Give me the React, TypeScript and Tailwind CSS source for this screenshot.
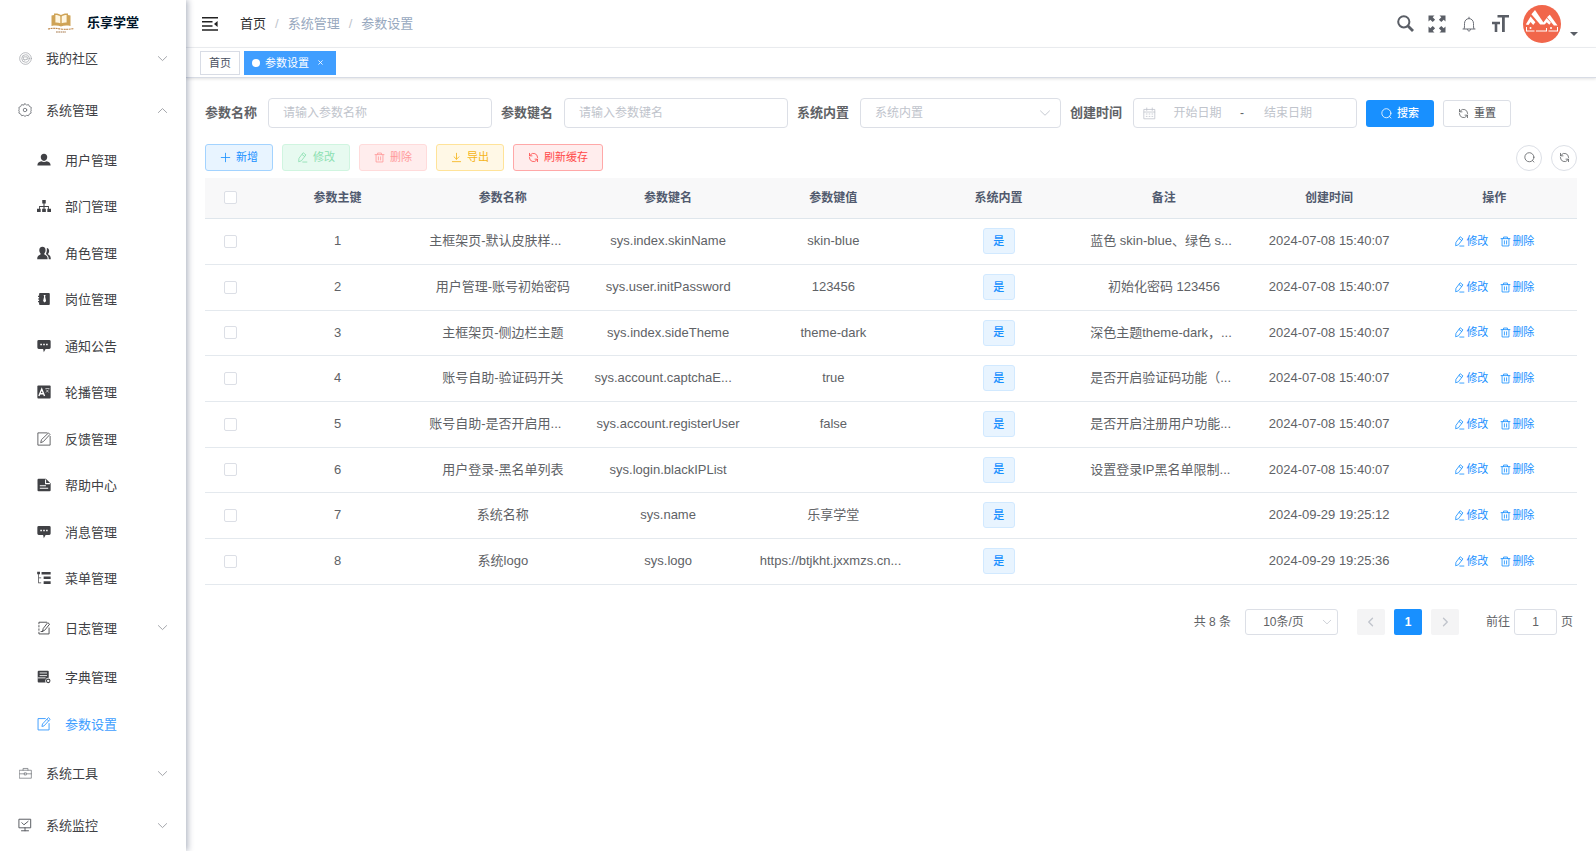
import type { ReactNode } from "react";

type IconProps = { className?: string };

function Line({ className = "size-3", width = 1.2, children }: IconProps & { width?: number; children: ReactNode }) {
  return (
    <svg viewBox="0 0 16 16" className={`${className} shrink-0`} fill="none" stroke="currentColor" strokeWidth={width} strokeLinecap="round" strokeLinejoin="round" aria-hidden="true">
      {children}
    </svg>
  );
}

function Solid({ className = "size-[14px]", children }: IconProps & { children: ReactNode }) {
  return (
    <svg viewBox="0 0 16 16" className={`${className} shrink-0`} fill="currentColor" aria-hidden="true">
      {children}
    </svg>
  );
}

const SearchIcon = ({ className }: IconProps) => (
  <Line className={className}>
    <circle cx="7.8" cy="7.6" r="6.6" />
    <path d="M12.4 12.4 14.4 14.6" />
  </Line>
);

const RefreshIcon = ({ className }: IconProps) => (
  <Line className={className}>
    <path d="M14 8a6 6 0 0 0-10.6-3.8L2.2 5.6M2.2 2v3.6h3.6" />
    <path d="M2 8a6 6 0 0 0 10.6 3.8l1.2-1.4M13.8 14v-3.6h-3.6" />
  </Line>
);

const EditIcon = ({ className }: IconProps) => (
  <Line className={className}>
    <path d="M9.4 1.4 13 4.2 6.4 12.8 2.4 14.2l.4-4.4z" />
    <path d="M7.6 3.8l3.6 2.8M8.4 14.6h6" />
  </Line>
);

const TrashIcon = ({ className }: IconProps) => (
  <Line className={className}>
    <path d="M1.5 3.8h13M5.2 3.6V1.5h5.6v2.1M3 4v10.5h10V4M6.4 7v4.6M9.6 7v4.6" />
  </Line>
);

const PlusIcon = ({ className }: IconProps) => (
  <Line className={className}>
    <path d="M8 1.8v12.4M1.8 8h12.4" />
  </Line>
);

const DownloadIcon = ({ className }: IconProps) => (
  <Line className={className}>
    <path d="M8 1.8v8.6M4.4 7 8 10.6 11.6 7M2 14h12" />
  </Line>
);

const Chevron = ({ className = "size-3", d = "M2 5.2 8 11l6-5.8" }: IconProps & { d?: string }) => (
  <Line className={className}>
    <path d={d} />
  </Line>
);

const CalendarIcon = ({ className }: IconProps) => (
  <Line className={className} width={1}>
    <path d="M1.5 3h13v11.5h-13zM1.5 6.2h13M4.6 1.2v3M11.4 1.2v3" />
    <path d="M4 8.6h1M7.5 8.6h1M11 8.6h1M4 11.6h1M7.5 11.6h1M11 11.6h1" />
  </Line>
);

/* sidebar icons */
const CommunityIcon = () => (
  <Line className="size-[13px] text-[#a0a3a9]" width={0.9}>
    <circle cx="8" cy="8" r="7.2" />
    <circle cx="8" cy="8" r="4.6" />
    <path d="M5.8 6h4.4v3.2H8.4L7 10.4V9.2H5.8z" />
  </Line>
);

const GearIcon = () => (
  <Line className="size-[14px] text-[#707379]" width={1}>
    <path d="M8 .8l1.8 1.5 2.3-.4 1 2.1 2.1 1-.4 2.2L15.3 8l-.7 1.5.4 2-2 1-1 2-2.2-.4L8 15.3l-1.8-1.2-2.2.4-1-2-2-1 .4-2L.7 8l.7-.8L1 5l2.1-1 1-2.1 2.3.4z" />
    <circle cx="8" cy="8" r="2" />
  </Line>
);

const UserIcon = () => (
  <Solid>
    <path d="M8 .8c2.3 0 3.7 1.5 3.7 3.7S10.2 9 8 9 4.3 6.7 4.3 4.500 5.700.8 8 .8zM.4 14.400c0-3.300 2-4.200 4.600-5 1.800 1.100 4.200 1.100 6 0 2.600.8 4.600 1.700 4.600 5z" />
  </Solid>
);

const TreeIcon = () => (
  <Solid>
    <path d="M6 1h4v4H8.600v3h5V11H16v3.800h-4.200V11h.8V9H8.600v2h1.500v3.800H5.900V11h1.500V9h-4v2h.8v3.800H0V11h2.400V8h5V5H6z" />
  </Solid>
);

const PeoplesIcon = () => (
  <Solid>
    <path d="M6.2.8c2.400 0 3.600 1.700 3.600 4 0 1.600-.6 2.800-1.400 3.500v1.300c2.400.9 3.800 1.800 3.800 5.400H.2c0-3.600 1.400-4.500 3.800-5.400V8.300C3.200 7.600 2.600 6.400 2.600 4.800c0-2.300 1.200-4 3.600-4z" />
    <path d="M11.200 2.200c1.800.2 2.700 1.700 2.700 3.500 0 1.300-.4 2.300-1.100 2.900v1c2 .9 3 2.200 3 5.400h-2.400c0-2.800-.8-4.400-3-5.700V8.200c.8-1 1-3.800.8-6z" />
  </Solid>
);

const PostIcon = () => (
  <Solid>
    <path d="M3.400 1.200h10.200a1 1 0 0 1 1 1v11.600a1 1 0 0 1-1 1H3.400a1 1 0 0 1-1-1v-2H1.200v-1.400h1.200V8.700H1.200V7.300h1.200V5.600H1.200V4.200h1.200v-2a1 1 0 0 1 1-1z" />
    <path fill="#fff" d="M7.600 3.400h2.200l-.5 2 1.100 5L8.700 12 7 10.400l1.100-5z" />
  </Solid>
);

const MessageIcon = () => (
  <Solid>
    <path d="M2 1h12a1.600 1.600 0 0 1 1.600 1.600v7.200a1.600 1.600 0 0 1-1.600 1.600H9.800L7.800 15l-.8-3.600H2A1.600 1.600 0 0 1 .4 9.800V2.600A1.600 1.600 0 0 1 2 1z" />
    <path fill="#fff" d="M3.800 5.400h1.800v1.800H3.800zM7.100 5.400h1.800v1.800H7.100zM10.400 5.400h1.800v1.800h-1.800z" />
  </Solid>
);

const LanguageIcon = () => (
  <Solid>
    <rect x=".4" y=".6" width="15.2" height="14.8" rx="1" />
    <path fill="none" stroke="#fff" strokeWidth="1.6" d="M2.200 12.600 5.400 4.600l3.200 8M3.400 10h4" />
    <path fill="none" stroke="#fff" strokeWidth=".7" d="M9.600 4h4.600M10.400 5.200l3 3.400M13.400 5.200l-3.200 3.400" />
  </Solid>
);

const NoteIcon = () => (
  <Line className="size-[14px]" width={0.9}>
    <path d="M15 5v10H1V1h10.500" />
    <path d="M13.400 1.400l1.400 1.400-7.600 8.200-3 1.200.8-3z" />
  </Line>
);

const FormIcon = () => (
  <Line className="size-[14px]" width={1.1}>
    <path d="M9.500 1.800H1.200v13h12.600V7.500" />
    <path d="M13.400 1l1.600 1.600-7 7.600-2.400.6.600-2.400zM11.600 2.800l1.600 1.600" />
  </Line>
);

const DocumentIcon = () => (
  <Solid>
    <path d="M1.800.8h8.400l5.400 5.400V14a1.200 1.200 0 0 1-1.200 1.200H1.800A1.200 1.200 0 0 1 .6 14V2A1.200 1.200 0 0 1 1.800.8z" />
    <path fill="none" stroke="#fff" strokeWidth="1.2" d="M9.800 1.600v4.800h5M3.200 8.800h7M3.200 11.800h9.600" />
  </Solid>
);

const MenuTreeIcon = () => (
  <Solid>
    <path d="M.2.8h3.200v3H2.200v3.600h2.600v.8H2.200v5h2.600v.8H1.400V3.800H.2z" />
    <path d="M5.200 1h10.400v3H5.200zM7.600 6.200h8v3h-8zM7.600 11.600h8v3.200h-8z" />
  </Solid>
);

const LogIcon = () => (
  <Line className="size-[14px]" width={1}>
    <path d="M11 1.400H2.200v1.800M2.200 5.200v1.600M2.200 9v1.600M2.200 12.800v2h11.600V8" />
    <path d="M12.600 2.200l1.800 1.400-5.600 7-2.400 1 .6-2.600zM4.600 12h2" />
  </Line>
);

const DictIcon = () => (
  <Solid>
    <path d="M2 .8h10.400a1 1 0 0 1 1 1V9a3.600 3.600 0 0 0-3.600 5.200H1.800a1 1 0 0 1-1-1V2A1.200 1.200 0 0 1 2 .8z" />
    <path fill="none" stroke="#fff" strokeWidth="1" d="M3 3.400h8.400M3 6.400h8.400M.8 9h9" />
    <circle cx="12.8" cy="12.4" r="2" fill="none" stroke="currentColor" strokeWidth="1.2" />
  </Solid>
);

const ToolIcon = () => (
  <Line className="size-[13px] text-[#707379]" width={0.9}>
    <path d="M.8 4h14.400v9.800H.8zM5 4V1.800h6V4M.8 8.400h5.800M9.400 8.400h5.800M7 7.200h2v2.600H7z" />
  </Line>
);

const MonitorIcon = () => (
  <Line className="size-[14px] text-[#55585e]" width={1.1}>
    <path d="M1.500 1.400h13v9.800h-13zM8 11.200v3.400M4 14.600h8M4.400 5.400l2.400 2.400 4.800-4" />
  </Line>
);

type Item = { label: string; icon: ReactNode; active?: boolean; group?: boolean };

const menuItems: Item[] = [
  { label: "用户管理", icon: <UserIcon /> },
  { label: "部门管理", icon: <TreeIcon /> },
  { label: "角色管理", icon: <PeoplesIcon /> },
  { label: "岗位管理", icon: <PostIcon /> },
  { label: "通知公告", icon: <MessageIcon /> },
  { label: "轮播管理", icon: <LanguageIcon /> },
  { label: "反馈管理", icon: <NoteIcon /> },
  { label: "帮助中心", icon: <DocumentIcon /> },
  { label: "消息管理", icon: <MessageIcon /> },
  { label: "菜单管理", icon: <MenuTreeIcon /> },
  { label: "日志管理", icon: <LogIcon />, group: true },
  { label: "字典管理", icon: <DictIcon /> },
  { label: "参数设置", icon: <FormIcon />, active: true },
];

const rows = [
  ["主框架页-默认皮肤样...", "sys.index.skinName", "skin-blue", "蓝色 skin-blue、绿色 s...", "2024-07-08 15:40:07"],
  ["用户管理-账号初始密码", "sys.user.initPassword", "123456", "初始化密码 123456", "2024-07-08 15:40:07"],
  ["主框架页-侧边栏主题", "sys.index.sideTheme", "theme-dark", "深色主题theme-dark，...", "2024-07-08 15:40:07"],
  ["账号自助-验证码开关", "sys.account.captchaE...", "true", "是否开启验证码功能（...", "2024-07-08 15:40:07"],
  ["账号自助-是否开启用...", "sys.account.registerUser", "false", "是否开启注册用户功能...", "2024-07-08 15:40:07"],
  ["用户登录-黑名单列表", "sys.login.blackIPList", "", "设置登录IP黑名单限制...", "2024-07-08 15:40:07"],
  ["系统名称", "sys.name", "乐享学堂", "", "2024-09-29 19:25:12"],
  ["系统logo", "sys.logo", "https://btjkht.jxxmzs.cn...", "", "2024-09-29 19:25:36"],
];

const columns = ["参数主键", "参数名称", "参数键名", "参数键值", "系统内置", "备注", "创建时间", "操作"];

function Group({ label, icon, open }: { label: string; icon: ReactNode; open?: boolean }) {
  return (
    <button className="flex h-[52px] w-full items-center px-[18px]">
      <span className="flex w-[14px] justify-center">{icon}</span>
      <span className="ml-[14px] pt-0.5">{label}</span>
      <Chevron className="ml-auto size-[11px] text-[#909399]" d={open ? "M2 11l6-5.8L14 11" : undefined} />
    </button>
  );
}

function Sidebar() {
  return (
    <aside className="z-10 flex w-[186px] shrink-0 flex-col overflow-hidden bg-white text-[13px] text-[#404145] shadow-[2px_0_6px_rgba(0,21,60,0.3)]">
      <a href="#" className="flex h-[45px] shrink-0 items-center justify-center gap-3">
        <svg viewBox="0 0 28 22" className="h-[22px] w-7" aria-hidden="true">
          <path fill="#cfa356" d="M4.500 3.500 7 3V1.500c3-.3 5.300.2 7 1.500 1.700-1.300 4-1.800 7-1.500V3l2.500.5V14c-4-.8-7-.6-9.500.6-2.500-1.200-5.500-1.400-9.500-.6z" />
          <path fill="#fff6e0" d="M8.400 3c2.200 0 3.800.5 4.900 1.500v6.800c-1.300-.8-3-1-4.900-.9zM19.600 3c-2.200 0-3.800.5-4.900 1.500v6.800c1.300-.8 3-1 4.900-.9z" />
          <path fill="none" stroke="#c08a4e" strokeWidth="1.1" strokeDasharray="2 .6" d="M1 17c4-1 8-.8 13 0s9 0 13-.4" />
          <path fill="none" stroke="#a87a4c" strokeWidth="1.2" strokeDasharray="1.8 .5" d="M9 20h10" />
        </svg>
        <span className="text-[13px] font-bold text-[#001529]">乐享学堂</span>
      </a>
      <nav className="min-h-0 flex-1 overflow-hidden">
        <div className="-mt-[13px]">
          <Group label="我的社区" icon={<CommunityIcon />} />
          <Group label="系统管理" icon={<GearIcon />} open />
          <ul>
            {menuItems.map((item) =>
              item.group ? (
                <li key={item.label} className="h-[53px]">
                  <button className="flex h-full w-full items-center pr-[18px] pl-[37px]">
                    {item.icon}
                    <span className="ml-[14px] pt-0.5">{item.label}</span>
                    <Chevron className="ml-auto size-[11px] text-[#909399]" />
                  </button>
                </li>
              ) : (
                <li key={item.label} className="odd:h-[47px] even:h-[46px]">
                  <a href="#" className={`flex h-full items-center pl-[37px] ${item.active ? "text-[#409eff]" : ""}`}>
                    {item.icon}
                    <span className="ml-[14px] pt-0.5">{item.label}</span>
                  </a>
                </li>
              ),
            )}
          </ul>
          <Group label="系统工具" icon={<ToolIcon />} />
          <Group label="系统监控" icon={<MonitorIcon />} />
        </div>
      </nav>
    </aside>
  );
}

function Navbar() {
  return (
    <header className="flex h-[48px] items-center border-b border-[#eef0f3] pr-[18px] pl-4 text-[#5a5e66]">
      <button aria-label="收起菜单" className="text-[#222]">
        <svg viewBox="0 0 16 14" className="h-[14px] w-4" fill="currentColor" aria-hidden="true">
          <path d="M0 0h16v1.500H0zM0 4.100h10.500v1.500H0zM0 8.200h10.500v1.500H0zM0 12.300h16v1.500H0zM15.600 4v6L12 7z" />
        </svg>
      </button>
      <nav className="ml-[22px] flex items-center gap-[9px] text-[13px] text-[#97a8be]">
        <a href="#" className="text-[#303133]">首页</a>
        <span className="text-[#c0c4cc]">/</span>
        <span>系统管理</span>
        <span className="text-[#c0c4cc]">/</span>
        <span>参数设置</span>
      </nav>
      <div className="ml-auto flex items-center">
        <button aria-label="搜索">
          <svg viewBox="0 0 17 17" className="size-[17px]" fill="none" stroke="currentColor" strokeWidth="2" aria-hidden="true">
            <circle cx="6.8" cy="6.8" r="5.6" />
            <path strokeWidth="2.8" d="M11 11l5 5" />
          </svg>
        </button>
        <button aria-label="全屏" className="ml-[14px]">
          <svg viewBox="0 0 18 18" className="size-[18px]" fill="currentColor" aria-hidden="true">
            <path d="M.5.5h6L4.700 2.300l2.400 2.400-2.400 2.400-2.400-2.400L.5 6.500z" />
            <path d="M17.500.5v6l-1.800-1.800-2.400 2.400-2.400-2.400 2.400-2.400L11.500.5z" />
            <path d="M.5 17.500v-6l1.800 1.800 2.400-2.400 2.400 2.400-2.400 2.400 1.800 1.800z" />
            <path d="M17.500 17.500h-6l1.800-1.800-2.400-2.400 2.400-2.400 2.400 2.400 1.800-1.800z" />
          </svg>
        </button>
        <button aria-label="消息" className="ml-4">
          <svg viewBox="0 0 14 16" className="h-4 w-[14px]" fill="none" stroke="currentColor" strokeWidth=".9" aria-hidden="true">
            <path d="M.6 13h12.800M2 13c.5-1 .5-2.500.5-5.500C2.500 4.800 4.300 2.600 7 2.600s4.500 2.200 4.500 4.900c0 3 0 4.500.5 5.500M7 2.600V.8M5.400 13.200c.2 2.400 3 2.400 3.200 0" />
          </svg>
        </button>
        <button aria-label="字号" className="ml-4">
          <svg viewBox="0 0 17 17" className="size-[17px]" fill="currentColor" aria-hidden="true">
            <path d="M5.500 0H17v2.600h-4.200V17H10V2.600H5.500zM0 6.800h8v2.400H5.300V17H2.700V9.200H0z" />
          </svg>
        </button>
        <button aria-label="用户" className="ml-[14px] flex items-end">
          <svg viewBox="0 0 38 38" className="size-[38px]" aria-hidden="true">
            <circle cx="19" cy="19" r="19" fill="#f1664b" />
            <path fill="#fff" d="M2.800 19.500 7.600 11.500l4.800 5.800-2.200 2.700-2.600-3-2.200 3z" />
            <path fill="#fff" d="M8.400 9.200 12 5l9.800 14.500h-4.600z" />
            <path fill="#fff" d="M19.500 18.500l4.200-5.500 4.200 4.800-1.600 2-2.600-2.600-1.800 2z" />
            <path fill="#fff" d="M24 12.200l2.800-2.400L34.500 20.500h-3.600z" />
            <path fill="none" stroke="#fff" strokeWidth="1" d="M3 26h8.500M13 26h11M25.500 26H35M3.500 22v4M34.500 22v4M23.500 23v3" />
            <circle cx="7.5" cy="23" r="1" fill="#fff" />
            <circle cx="28" cy="23" r="1" fill="#fff" />
          </svg>
          <svg viewBox="0 0 8 4" className="mb-[7px] ml-[9px] h-1 w-2" aria-hidden="true">
            <path fill="currentColor" d="M0 0h8L4 4z" />
          </svg>
        </button>
      </div>
    </header>
  );
}

function Tags() {
  return (
    <div className="flex h-[30px] items-center gap-1 border-b border-[#d8dce5] pl-[14px] text-[11px] shadow-[0_1px_3px_rgba(0,0,0,0.12)]">
      <a href="#" className="flex h-6 items-center border border-[#d8dce5] px-2 pt-px text-[#495060]">首页</a>
      <a href="#" className="flex h-6 items-center bg-[#409eff] px-2 text-white">
        <span className="size-2 rounded-full bg-white" />
        <span className="ml-[5px] pt-px">参数设置</span>
        <svg viewBox="0 0 6 6" className="mr-[5px] ml-[9px] size-[5px]" stroke="currentColor" strokeWidth="1" aria-hidden="true">
          <path d="M.5.5l5 5M5.500.5l-5 5" />
        </svg>
      </a>
    </div>
  );
}

const field = "h-[30px] rounded border border-[#dcdfe6] bg-white text-[12px] placeholder:text-[#c0c4cc]";

function Filters() {
  return (
    <form className="flex flex-wrap items-center gap-[9px] text-[#606266]">
      <div className="flex items-center gap-[11px]">
        <label htmlFor="name" className="text-[13px] font-bold">参数名称</label>
        <input id="name" placeholder="请输入参数名称" className={`${field} w-[224px] px-[14px]`} />
      </div>
      <div className="flex items-center gap-[11px]">
        <label htmlFor="key" className="text-[13px] font-bold">参数键名</label>
        <input id="key" placeholder="请输入参数键名" className={`${field} w-[224px] px-[14px]`} />
      </div>
      <div className="flex items-center gap-[11px]">
        <label htmlFor="builtin" className="text-[13px] font-bold">系统内置</label>
        <div className="relative">
          <select id="builtin" className={`${field} w-[201px] appearance-none px-[14px] text-[#c0c4cc]`}>
            <option>系统内置</option>
            <option>是</option>
            <option>否</option>
          </select>
          <Chevron className="pointer-events-none absolute top-[9px] right-[10px] size-3 text-[#c0c4cc]" />
        </div>
      </div>
      <div className="flex items-center gap-[11px]">
        <label htmlFor="start" className="text-[13px] font-bold">创建时间</label>
        <div className={`${field} flex w-[224px] items-center pl-[9px]`}>
          <CalendarIcon className="size-[13px] text-[#c0c4cc]" />
          <input id="start" placeholder="开始日期" className="w-[83px] text-center placeholder:text-[#c0c4cc]" />
          <span className="w-[6px] text-center">-</span>
          <input aria-label="结束日期" placeholder="结束日期" className="w-[86px] text-center placeholder:text-[#c0c4cc]" />
        </div>
      </div>
      <button type="button" className="flex h-[27px] w-[68px] items-center justify-center gap-[5px] rounded-[3px] bg-[#1890ff] text-[11px] font-medium text-white">
        <SearchIcon className="size-[11px]" />
        搜索
      </button>
      <button type="reset" className="flex h-[27px] w-[68px] items-center justify-center gap-[5px] rounded-[3px] border border-[#dcdfe6] text-[11px] font-medium">
        <RefreshIcon className="size-[11px]" />
        重置
      </button>
    </form>
  );
}

const toolButtons = [
  { label: "新增", icon: PlusIcon, style: "border-[#a3d3ff] bg-[#e8f4ff] text-[#1890ff]" },
  { label: "修改", icon: EditIcon, style: "border-[#d0f5e0] bg-[#e7faf0] text-[#8be0b0]" },
  { label: "删除", icon: TrashIcon, style: "border-[#ffdbdb] bg-[#ffeded] text-[#ff9a9a]" },
  { label: "导出", icon: DownloadIcon, style: "border-[#ffe399] bg-[#fff8e6] text-[#f5b417]" },
  { label: "刷新缓存", icon: RefreshIcon, style: "border-[#ffa8a8] bg-[#ffeded] text-[#ff4949]" },
];

function Toolbar() {
  return (
    <div className="mt-4 flex items-center gap-[9px]">
      {toolButtons.map(({ label, icon: Icon, style }) => (
        <button key={label} className={`flex h-[27px] items-center gap-[5px] rounded-[3px] border px-[14px] text-[11px] ${style}`}>
          <Icon className="size-[11px]" />
          {label}
        </button>
      ))}
      <button aria-label="隐藏搜索" className="ml-auto flex size-[26px] items-center justify-center rounded-full border border-[#dcdfe6] text-[#606266]">
        <SearchIcon className="size-[11px]" />
      </button>
      <button aria-label="刷新" className="flex size-[26px] items-center justify-center rounded-full border border-[#dcdfe6] text-[#606266]">
        <RefreshIcon className="size-[11px]" />
      </button>
    </div>
  );
}

function Checkbox({ label }: { label: string }) {
  return <input type="checkbox" aria-label={label} className="block size-[13px] appearance-none rounded-[2px] border border-[#dcdfe6] bg-white" />;
}

// shortened values fill the cell from its left padding, the others are centered
function TextCell({ text }: { text: string }) {
  return <td className={`px-[9px] ${text.endsWith("...") ? "text-left" : ""}`}>{text}</td>;
}

function ConfigTable() {
  return (
    <table className="mt-[7px] w-full table-fixed border-collapse text-center text-[13px] text-[#606266]">
      <thead>
        <tr className="h-10 border-b border-[#dfe6ec] bg-[#f8f8f9] text-[12px] text-[#515a6e]">
          <th className="w-[50px] pl-[19px]">
            <Checkbox label="全选" />
          </th>
          {columns.map((name) => (
            <th key={name} className="font-bold">{name}</th>
          ))}
        </tr>
      </thead>
      <tbody>
        {rows.map(([name, key, value, remark, time], i) => (
          <tr key={key} className="h-[46px] border-b border-[#e4e9ee] whitespace-nowrap nth-[3n]:h-[45px]">
            <td className="pl-[19px]">
              <Checkbox label={name} />
            </td>
            <td>{i + 1}</td>
            <TextCell text={name} />
            <TextCell text={key} />
            <TextCell text={value} />
            <td>
              <span className="inline-flex h-[26px] w-8 items-center justify-center rounded-[3px] border border-[#d1e9ff] bg-[#e8f4ff] align-middle text-[11px] font-medium text-[#1890ff]">是</span>
            </td>
            <TextCell text={remark} />
            <TextCell text={time} />
            <td>
              <div className="flex items-center justify-center gap-3 text-[11px] text-[#1890ff]">
                <button className="flex items-center gap-px">
                  <EditIcon className="size-[11px]" />
                  修改
                </button>
                <button className="flex items-center gap-px">
                  <TrashIcon className="size-[11px]" />
                  删除
                </button>
              </div>
            </td>
          </tr>
        ))}
      </tbody>
    </table>
  );
}

function Pagination() {
  return (
    <div className="mt-6 flex items-center justify-end pr-1 text-[12px] text-[#606266]">
      <span>共 8 条</span>
      <div className="relative ml-[14px]">
        <select aria-label="每页条数" className="h-[26px] w-[93px] appearance-none rounded-[3px] border border-[#dcdfe6] pr-4 text-center">
          <option>10条/页</option>
          <option>20条/页</option>
        </select>
        <Chevron className="pointer-events-none absolute top-2 right-[6px] size-[10px] text-[#c0c4cc]" />
      </div>
      <button aria-label="上一页" className="ml-[19px] flex h-[26px] w-7 items-center justify-center rounded-[2px] bg-[#f4f4f5] text-[#c0c4cc]">
        <Line className="size-3" width={1.8}><path d="M10 3 5 8l5 5" /></Line>
      </button>
      <button className="ml-[9px] h-[26px] w-7 rounded-[2px] bg-[#1890ff] font-bold text-white">1</button>
      <button aria-label="下一页" className="ml-[9px] flex h-[26px] w-7 items-center justify-center rounded-[2px] bg-[#f4f4f5] text-[#c0c4cc]">
        <Line className="size-3" width={1.8}><path d="M6 3l5 5-5 5" /></Line>
      </button>
      <label htmlFor="page" className="ml-[27px]">前往</label>
      <input id="page" defaultValue="1" className="mx-1 h-[26px] w-[43px] rounded-[3px] border border-[#dcdfe6] text-center" />
      <span>页</span>
    </div>
  );
}

export default function App() {
  return (
    <div className="flex h-screen bg-white font-['Liberation_Sans','Noto_Sans_CJK_SC',sans-serif]">
      <Sidebar />
      <div className="min-w-0 flex-1">
        <Navbar />
        <Tags />
        <main className="px-[19px] pt-5">
          <Filters />
          <Toolbar />
          <ConfigTable />
          <Pagination />
        </main>
      </div>
    </div>
  );
}
